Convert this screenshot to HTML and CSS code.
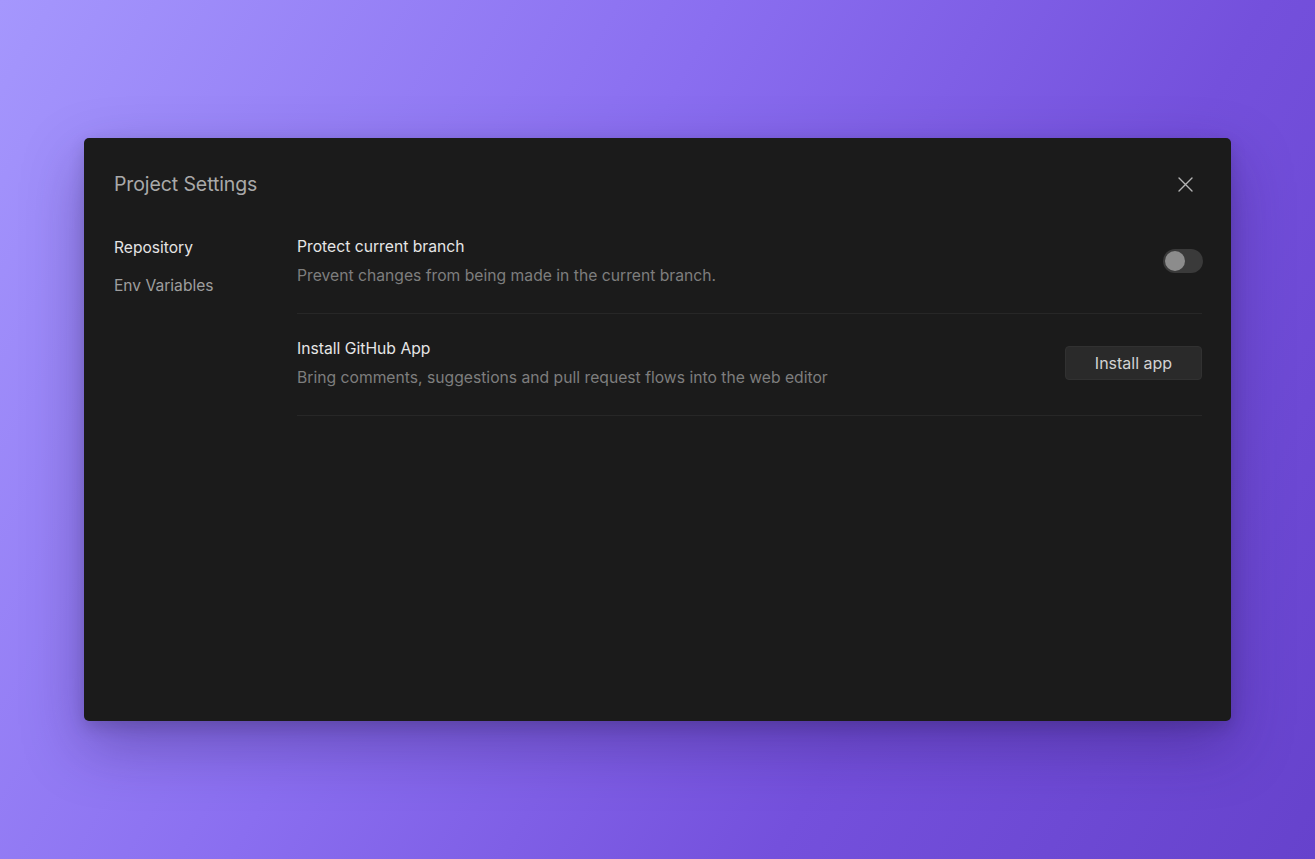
FILE: index.html
```html
<!DOCTYPE html>
<html lang="en">
<head>
<meta charset="utf-8">
<title>Project Settings</title>
<link rel="stylesheet" href="styles.css">
</head>
<body>
<div class="stage">
  <div class="modal">
    <div class="modal-header">
      <h1 class="modal-title">Project Settings</h1>
      <button class="close-btn" aria-label="Close">
        <svg width="15" height="15" viewBox="0 0 15 15" fill="none"><path d="M1 1L14 14M14 1L1 14" stroke="#b4b4b4" stroke-width="1.4" stroke-linecap="round"/></svg>
      </button>
    </div>
    <div class="modal-body">
      <nav class="sidebar">
        <a class="nav-item active">Repository</a>
        <a class="nav-item">Env Variables</a>
      </nav>
      <div class="content">
        <div class="row">
          <div class="row-text">
            <div class="row-title">Protect current branch</div>
            <div class="row-desc">Prevent changes from being made in the current branch.</div>
          </div>
          <div class="toggle"><span class="knob"></span></div>
        </div>
        <div class="row">
          <div class="row-text">
            <div class="row-title">Install GitHub App</div>
            <div class="row-desc">Bring comments, suggestions and pull request flows into the web editor</div>
          </div>
          <button class="btn">Install app</button>
        </div>
      </div>
    </div>
  </div>
</div>
</body>
</html>
```
FILE: styles.css
```css
* { box-sizing: border-box; }
html, body { margin: 0; height: 100%; }
body {
  font-family: Inter, "Noto Sans", sans-serif;
  background: linear-gradient(120deg, #a597fd 0%, #8a6ef0 40%, #7450dc 70%, #6642cc 100%);
  overflow: hidden;
}
.stage {
  height: 859px;
  padding: 138px 84px 0 84px;
}
.modal {
  width: 1147px;
  height: 583px;
  background: #1b1b1b;
  border-radius: 5px;
  box-shadow: 0 24px 60px rgba(40, 20, 90, 0.35), 0 6px 16px rgba(0,0,0,0.15);
  padding: 30px 29px 30px 30px;
  display: flex;
  flex-direction: column;
}
.modal-header {
  display: flex;
  align-items: center;
  justify-content: space-between;
  height: 32px;
}
.modal-title {
  margin: 0;
  font-size: 19.5px;
  font-weight: 400;
  color: #a9a9a9;
  line-height: 32px;
  letter-spacing: -0.1px;
}
.close-btn {
  background: none;
  border: 0;
  padding: 0;
  width: 15px;
  height: 15px;
  margin-right: 9px;
  display: flex;
}
.modal-body {
  display: flex;
  margin-top: 37px;
}
.sidebar {
  width: 183px;
  display: flex;
  flex-direction: column;
  gap: 16px;
}
.nav-item {
  font-size: 15.6px;
  line-height: 22px;
  color: #9e9e9e;
}
.nav-item.active { color: #e4e4e4; }
.content { flex: 1; }
.row {
  display: flex;
  align-items: center;
  justify-content: space-between;
  padding: 25px 0 26px;
  border-bottom: 1px solid #272727;
}
.row:first-child { padding-top: 0; }
.row-title {
  font-size: 15.7px;
  line-height: 20px;
  color: #e6e6e6;
}
.row-desc {
  margin-top: 8px;
  font-size: 15.7px;
  line-height: 22px;
  color: #7e7e7e;
}
.toggle {
  width: 40px;
  height: 24px;
  border-radius: 12px;
  background: #3a3a3a;
  padding: 2px;
  display: flex;
  margin-right: -1px;
  margin-top: -2px;
}
.knob {
  width: 20px;
  height: 20px;
  border-radius: 50%;
  background: #8c8c8c;
}
.btn {
  font-family: inherit;
  width: 137px;
  height: 34px;
  background: #2a2a2a;
  border: 1px solid #313131;
  border-radius: 4px;
  color: #d2d2d2;
  font-size: 16px;
  margin-top: -2px;
}
```
